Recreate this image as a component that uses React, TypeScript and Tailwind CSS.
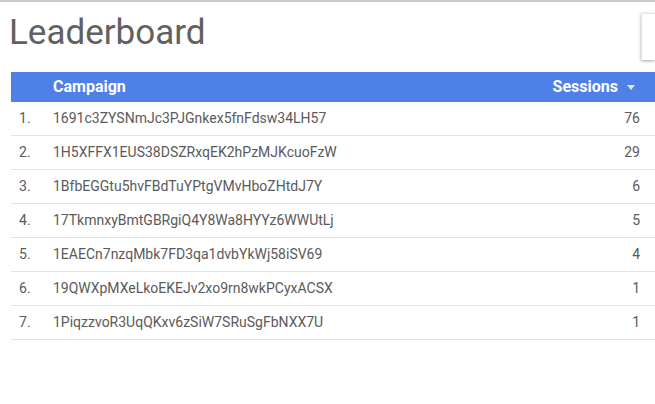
const rows: [string, number][] = [
  ["1691c3ZYSNmJc3PJGnkex5fnFdsw34LH57", 76],
  ["1H5XFFX1EUS38DSZRxqEK2hPzMJKcuoFzW", 29],
  ["1BfbEGGtu5hvFBdTuYPtgVMvHboZHtdJ7Y", 6],
  ["17TkmnxyBmtGBRgiQ4Y8Wa8HYYz6WWUtLj", 5],
  ["1EAECn7nzqMbk7FD3qa1dvbYkWj58iSV69", 4],
  ["19QWXpMXeLkoEKEJv2xo9rn8wkPCyxACSX", 1],
  ["1PiqzzvoR3UqQKxv6zSiW7SRuSgFbNXX7U", 1],
];

export default function App() {
  return (
    <div className="w-[655px] h-[404px] bg-white overflow-hidden font-['Roboto',sans-serif]">
      <div className="h-[2px] bg-[#c9c9c9]" />
      <div className="flex h-[70px]">
        <h1 className="flex-1 pl-[9px] pt-[10px] text-[35px] leading-[42px] text-[#616161] font-normal">
          Leaderboard
        </h1>
        <div className="mt-[11px] w-[14px] h-[47px] bg-white border-l border-t border-[#e6e6e6] shadow-[0_1px_3px_rgba(0,0,0,0.35)]" />
      </div>
      <div className="ml-[11px]">
        <div className="flex items-center h-[30px] bg-[#4f80e8] text-white text-[16px] font-bold">
          <div className="w-[42px]" />
          <div className="flex-1">Campaign</div>
          <div className="flex items-center pr-[20px]">
            Sessions
            <svg width="8" height="5" viewBox="0 0 8 5" className="ml-[9px]">
              <path d="M0 0h8L4 5z" fill="#dfe7fb" />
            </svg>
          </div>
        </div>
        {rows.map(([name, n], i) => (
          <div
            key={name}
            className="flex items-center h-[34px] border-b border-[#e3e3e3] text-[14px] text-[#5a5a5a]"
          >
            <div className="w-[42px] pl-[8px]">{i + 1}.</div>
            <div className="flex-1">{name}</div>
            <div className="pr-[15px]">{n}</div>
          </div>
        ))}
      </div>
    </div>
  );
}
